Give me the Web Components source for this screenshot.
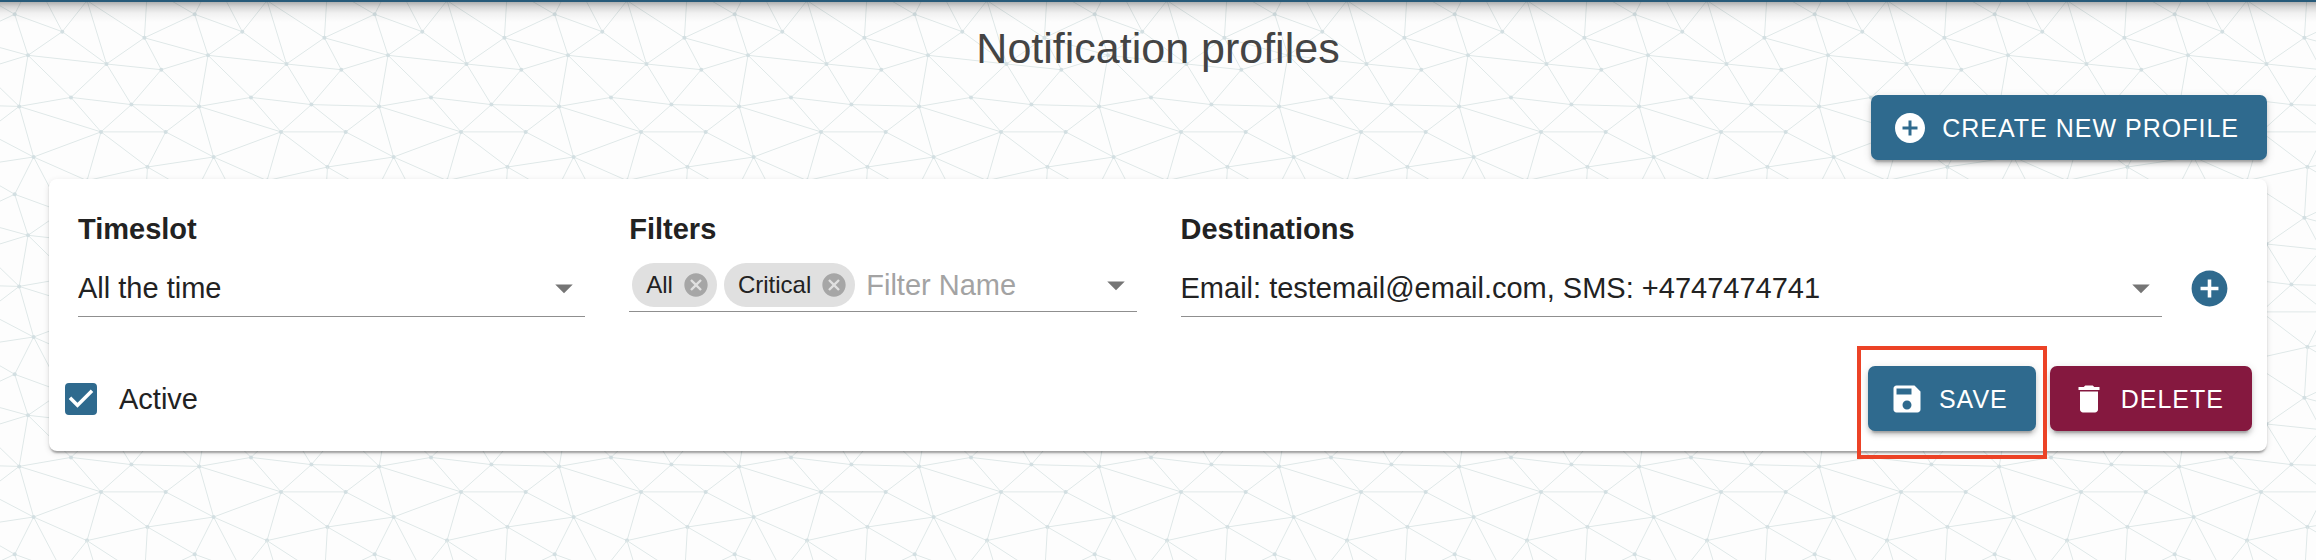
<!DOCTYPE html>
<html lang="en">
<head>
<meta charset="utf-8">
<meta name="viewport" content="width=device-width, initial-scale=1">
<title>Notification profiles</title>
<style>
  html, body { margin: 0; min-height: 100%; background: #fdfdfd; }
  body { font-family: "Liberation Sans", Arial, Helvetica, sans-serif; color: #222; }
</style>
</head>
<body>
<notification-page>
  <profile-card></profile-card>
</notification-page>

<script>
const ICONS = {
  plus: 'M12 2C6.48 2 2 6.48 2 12s4.48 10 10 10 10-4.48 10-10S17.52 2 12 2zm5 11h-4v4h-2v-4H7v-2h4V7h2v4h4v2z',
  save: 'M17 3H5c-1.11 0-2 .9-2 2v14c0 1.1.89 2 2 2h14c1.1 0 2-.9 2-2V7l-4-4zm-5 16c-1.66 0-3-1.34-3-3s1.34-3 3-3 3 1.34 3 3-1.34 3-3 3zm3-10H5V5h10v4z',
  trash: 'M6 19c0 1.1.9 2 2 2h8c1.1 0 2-.9 2-2V7H6v12zM19 4h-3.5l-1-1h-5l-1 1H5v2h14V4z',
  cancel: 'M12 2C6.47 2 2 6.47 2 12s4.47 10 10 10 10-4.47 10-10S17.53 2 12 2zm5 13.59L15.59 17 12 13.41 8.41 17 7 15.59 10.59 12 7 8.41 8.41 7 12 10.59 15.59 7 17 8.41 13.41 12 17 15.59z',
  arrow: 'M7 10l5 5 5-5z',
  check: 'M10 17l-5-5 1.41-1.41L10 14.17l7.59-7.59L19 8l-9 9z'
};

function define(name, html, setup) {
  const template = document.createElement('template');
  template.innerHTML = html;
  customElements.define(name, class extends HTMLElement {
    constructor() {
      super();
      this.attachShadow({ mode: 'open' }).append(template.content.cloneNode(true));
    }
    connectedCallback() { if (setup) setup(this, this.shadowRoot); }
  });
}

define('md-icon', `
  <style>
    :host { display: block; flex: none; width: var(--icon-size, 42px); height: var(--icon-size, 42px); }
    svg { display: block; width: 100%; height: 100%; fill: currentColor; }
  </style>
  <svg viewBox="0 0 24 24" aria-hidden="true"><path/></svg>`,
  (host, root) => root.querySelector('path').setAttribute('d', ICONS[host.getAttribute('name')]));

define('action-button', `
  <style>
    :host { display: block; --icon-size: 36px; }
    button { display: flex; align-items: center; gap: 14px; height: 65px; padding: 0 28px 0 21px;
      border: 0; border-radius: 7px; background: var(--button-color, #2f6a8e); color: #fff; font: inherit;
      font-size: 25px; letter-spacing: 1px; line-height: 32px; text-transform: uppercase; white-space: nowrap; cursor: pointer;
      box-shadow: 0 6px 2px -4px rgba(0,0,0,.2), 0 4px 4px rgba(0,0,0,.14), 0 2px 10px rgba(0,0,0,.12); }
  </style>
  <button type="button"><md-icon></md-icon><slot></slot></button>`,
  (host, root) => {
    const old = root.querySelector('md-icon');
    const icon = document.createElement('md-icon');
    icon.setAttribute('name', host.getAttribute('icon'));
    old.replaceWith(icon);
  });

define('filter-chip', `
  <style>
    :host { display: flex; align-items: center; flex: none; height: 44px; padding: 0 7px 0 14px; gap: 9px;
      border-radius: 22px; background: #e0e0e0; font-size: 24px; line-height: 44px; --icon-size: 28px; }
    button { padding: 0; border: 0; background: none; color: #a6a6a6; cursor: pointer; }
  </style>
  <slot></slot><button type="button" aria-label="Remove filter"><md-icon name="cancel"></md-icon></button>`);

define('select-field', `
  <style>
    :host { display: block; min-width: 0; }
    label { display: block; margin-bottom: 14px; font-size: 29px; font-weight: bold; line-height: 32px; }
    .row { display: flex; align-items: center; gap: 18px; }
    .box { display: grid; flex: 1; min-width: 0; align-items: center; border-bottom: 1px solid #8f8f8f; }
    .box > * { grid-area: 1 / 1; }
    select { appearance: none; width: 100%; height: 57px; padding: 0 42px 0 0; border: 0; border-radius: 0; outline: 0;
      background: none; color: inherit; font: inherit; font-size: 29px; line-height: 32px; text-overflow: ellipsis; }
    md-icon { justify-self: end; color: #757575; pointer-events: none; }
  </style>
  <label for="choice"></label>
  <div class="row">
    <div class="box"><select id="choice"><option></option></select><md-icon name="arrow"></md-icon></div>
    <slot></slot>
  </div>`,
  (host, root) => {
    root.querySelector('label').textContent = host.getAttribute('label');
    root.querySelector('option').textContent = host.getAttribute('value');
  });

define('filter-field', `
  <style>
    :host { display: block; min-width: 0; }
    label { display: block; margin-bottom: 14px; font-size: 29px; font-weight: bold; line-height: 32px; }
    .box { display: flex; align-items: center; gap: 7px; padding: 4px 0 4px 3px; border-bottom: 1px solid #8f8f8f; }
    input { flex: 1; min-width: 0; height: 42px; padding: 0 4px; border: 0; outline: 0; background: none;
      color: inherit; font: inherit; font-size: 29px; }
    input::placeholder { color: #a3a3a3; opacity: 1; }
    button { padding: 0; border: 0; background: none; color: #757575; cursor: pointer; }
  </style>
  <label for="filter">Filters</label>
  <div class="box">
    <slot></slot>
    <input id="filter" type="text" placeholder="Filter Name">
    <button type="button" aria-label="Open"><md-icon name="arrow"></md-icon></button>
  </div>`);

define('check-option', `
  <style>
    :host { display: block; }
    label { display: flex; align-items: center; gap: 22px; font-size: 29px; line-height: 32px; cursor: pointer; }
    .box { display: grid; grid-template: 32px / 32px; place-items: center; place-content: center; width: 32px; height: 32px; }
    .box > * { grid-area: 1 / 1; }
    input { appearance: none; width: 32px; height: 32px; margin: 0; border-radius: 4px; border: 2px solid #2f6a8e; }
    input:checked { background: #2f6a8e; }
    md-icon { color: #fff; pointer-events: none; }
    input:not(:checked) + md-icon { visibility: hidden; }
  </style>
  <label><span class="box"><input type="checkbox" checked><md-icon name="check"></md-icon></span><slot></slot></label>`);

define('highlight-frame', `
  <style>
    :host { display: block; position: relative; }
    :host::after { content: ""; position: absolute; inset: -20px -11px -28px; border: 4px solid #ec4226; pointer-events: none; }
  </style>
  <slot></slot>`);

define('profile-card', `
  <style>
    :host { display: block; padding: 34px 0 20px; border-radius: 8px; background: #fff;
      box-shadow: 0 4px 2px -2px rgba(0,0,0,.2), 0 2px 2px rgba(0,0,0,.14), 0 2px 6px rgba(0,0,0,.12); }
    .fields { display: grid; grid-template-columns: repeat(4, minmax(0, 1fr)); gap: 44px; align-items: start; padding: 0 28px 0 29px; }
    .wide { grid-column: span 2; }
    .add { padding: 0 8px; border: 0; background: none; color: #2f6a8e; cursor: pointer; --icon-size: 43px; }
    footer { display: flex; align-items: center; gap: 14px; margin-top: 49px; padding: 0 15px 0 16px; }
    check-option { margin-right: auto; }
    .delete { --button-color: #85183f; }
  </style>
  <div class="fields">
    <select-field label="Timeslot" value="All the time"></select-field>
    <filter-field><filter-chip>All</filter-chip><filter-chip>Critical</filter-chip></filter-field>
    <select-field class="wide" label="Destinations" value="Email: testemail@email.com, SMS: +4747474741">
      <button class="add" type="button" aria-label="Add destination"><md-icon name="plus"></md-icon></button>
    </select-field>
  </div>
  <footer>
    <check-option>Active</check-option>
    <highlight-frame><action-button icon="save">Save</action-button></highlight-frame>
    <action-button class="delete" icon="trash">Delete</action-button>
  </footer>`);

define('mesh-backdrop', `
  <style>
    :host { display: block; position: absolute; inset: 0; z-index: -1; overflow: hidden; }
    svg { display: block; width: 100%; height: 100%; }
  </style>
  <svg aria-hidden="true"><defs><pattern id="mesh" width="180" height="180" patternUnits="userSpaceOnUse"></pattern></defs>
    <rect width="100%" height="100%" fill="url(#mesh)"/></svg>`,
  (host, root) => {
    const nodes = { A: [14.7, 14.3], B: [62.3, 31.7], C: [144.4, 37.8], D: [28, 55.3], E: [106.5, 64], F: [161.3, 69.7],
      G: [71, 97.4], H: [131.4, 104.6], I: [19.2, 106.4], J: [101, 131.9], K: [165.7, 131.9], L: [33.6, 157],
      M: [147.5, 167], N: [87, 180.6] };
    // Each link: start, end, and how many tiles right and down the end lies.
    const links = ['AB00', 'AD00', 'BD00', 'BE00', 'CA10', 'CE00', 'CF00', 'CD10', 'DE00', 'EF00', 'FD10', 'DG00', 'DI00',
      'EG00', 'EH00', 'FH00', 'FI10', 'IG00', 'GH00', 'HI10', 'IJ00', 'GJ00', 'HJ00', 'HK00', 'JK00', 'KI10', 'KL10',
      'KM00', 'IL00', 'JL00', 'JM00', 'JN00', 'LN00', 'ML10', 'MN00', 'MA11', 'LA01', 'LB01'];
    // N lies on the tile's lower edge, so its links downward start one tile above.
    const wrapped = [['B', 'N', 0, -1], ['E', 'N', 0, -1], ['C', 'N', 0, -1], ['C', 'M', 0, -1]];
    const all = links.map(([a, b, x, y]) => [a, b, +x, +y]).concat(wrapped);
    const lines = all.map(([a, b, x, y]) =>
      `M${nodes[a]}L${nodes[b][0] + 180 * x} ${nodes[b][1] + 180 * y}`).join('');
    const dots = Object.values(nodes).map(([x, y]) => `<circle cx="${x}" cy="${y}" r="2"/>`).join('');
    let tiles = '';
    for (const x of [-180, 0, 180]) for (const y of [-180, 0, 180])
      tiles += `<g transform="translate(${x} ${y})"><path d="${lines}" fill="none" stroke="#dfe8e8"/><g fill="#d3dfe2">${dots}</g></g>`;
    root.querySelector('pattern').innerHTML = tiles;
  });

define('notification-page', `
  <style>
    :host { display: block; position: relative; isolation: isolate; min-height: 100vh; background: #fdfdfd; }
    header { position: relative; height: 2px; background: #275a79; }
    header::after { content: ""; position: absolute; top: 100%; left: 0; right: 0; height: 20px;
      background: linear-gradient(rgba(0,0,0,.3), rgba(0,0,0,.15) 25%, rgba(0,0,0,.05) 55%, rgba(0,0,0,0)); }
    main { padding: 22px 49px 49px; }
    h1 { margin: 0 0 23px; color: #444; font-size: 43px; font-weight: normal; line-height: 48px; text-align: center; }
    .toolbar { display: flex; justify-content: flex-end; margin-bottom: 19px; }
  </style>
  <mesh-backdrop></mesh-backdrop>
  <header></header>
  <main>
    <h1>Notification profiles</h1>
    <div class="toolbar"><action-button icon="plus">Create new profile</action-button></div>
    <slot></slot>
  </main>`);
</script>
</body>
</html>
